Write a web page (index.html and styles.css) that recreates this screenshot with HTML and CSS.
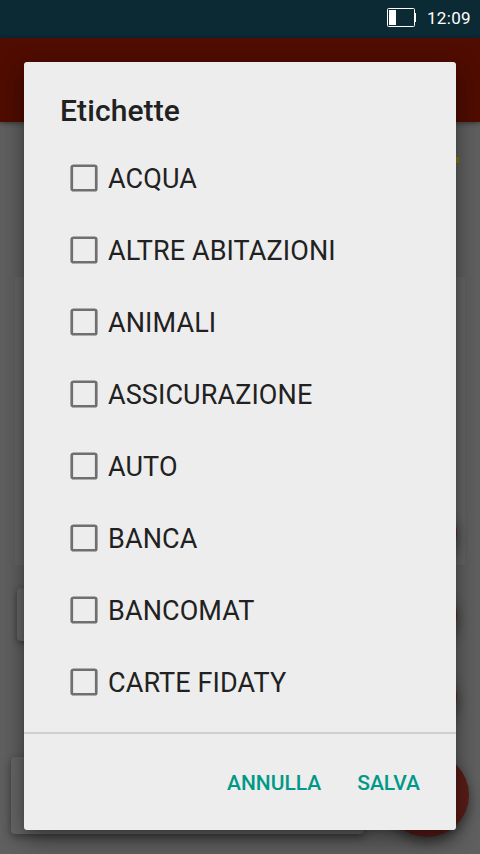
FILE: index.html
```html
<!DOCTYPE html>
<html lang="it">
<head>
<meta charset="utf-8">
<title>Etichette</title>
<link rel="stylesheet" href="styles.css">
</head>
<body>
<header class="status">
  <svg class="battery" width="29" height="20" viewBox="0 0 29 20"><rect x=".5" y=".5" width="27" height="18" rx="1" fill="none" stroke="#fff"/><path d="M2 2h7v15H2zM28 5h1v9h-1z" fill="#fff"/></svg>
  <span class="clock">12:09</span>
</header>
<div class="appbar"></div>
<main class="page">
  <div class="marker"></div>
  <div class="panel"></div>
  <div class="field"></div>
  <div class="snack"></div>
</main>
<div class="fabs">
  <i class="fab mini"></i>
  <i class="fab mini"></i>
  <i class="fab mini"></i>
  <i class="fab"></i>
</div>
<svg width="0" height="0" class="defs"><symbol id="box" viewBox="0 0 28 28"><rect x="1.75" y="1.75" width="24.5" height="24.5" rx="1.6" fill="none" stroke="#6f6f6f" stroke-width="2.7"/></symbol></svg>
<section class="dialog" role="dialog">
  <h1 class="title">Etichette</h1>
  <ul class="list">
    <li class="item"><svg class="box"><use href="#box"/></svg><span class="label">ACQUA</span></li>
    <li class="item"><svg class="box"><use href="#box"/></svg><span class="label">ALTRE ABITAZIONI</span></li>
    <li class="item"><svg class="box"><use href="#box"/></svg><span class="label">ANIMALI</span></li>
    <li class="item"><svg class="box"><use href="#box"/></svg><span class="label">ASSICURAZIONE</span></li>
    <li class="item"><svg class="box"><use href="#box"/></svg><span class="label">AUTO</span></li>
    <li class="item"><svg class="box"><use href="#box"/></svg><span class="label">BANCA</span></li>
    <li class="item"><svg class="box"><use href="#box"/></svg><span class="label">BANCOMAT</span></li>
    <li class="item"><svg class="box"><use href="#box"/></svg><span class="label">CARTE FIDATY</span></li>
  </ul>
  <footer class="actions">
    <button class="action">ANNULLA</button>
    <button class="action">SALVA</button>
  </footer>
</section>
</body>
</html>
```
FILE: styles.css
```css
* { box-sizing: border-box; }
body {
  position: relative;
  display: flex;
  flex-direction: column;
  height: 854px;
  margin: 0;
  overflow: hidden;
  background: #606060;
  font-family: Roboto, sans-serif;
}
.status {
  display: flex;
  align-items: center;
  justify-content: flex-end;
  gap: 11px;
  height: 38px;
  padding: 0 9px 2px 0;
  background: #0b2a33;
  color: #fff;
}
.clock {
  font-size: 17px;
  line-height: 20px;
  letter-spacing: .35px;
}
.appbar {
  height: 84px;
  background: #500c01;
  box-shadow: 0 1px 5px rgba(0, 0, 0, .45);
  z-index: 1;
}
.page {
  display: flex;
  flex-direction: column;
  align-items: flex-start;
  height: 732px;
}
.marker {
  align-self: flex-end;
  width: 9px;
  height: 6px;
  margin: 35px 21px 0 0;
  background: #877414;
}
.panel {
  width: 450px;
  height: 288px;
  margin: 114px 0 0 15px;
  background: #666;
}
.field {
  width: 340px;
  height: 53px;
  margin: 23px 0 0 17px;
  border-radius: 4px;
  background: #666;
  box-shadow: 0 2px 6px rgba(0, 0, 0, .4);
}
.snack {
  width: 353px;
  height: 77px;
  margin: 116px 0 0 11px;
  border-radius: 4px;
  background: #666;
  box-shadow: 0 3px 8px rgba(0, 0, 0, .4);
}
.fabs {
  position: absolute;
  right: 11px;
  bottom: 17px;
  display: flex;
  flex-direction: column;
  align-items: center;
  gap: 22px;
}
.fab {
  width: 84px;
  height: 84px;
  margin-top: 4px;
  border-radius: 50%;
  background: #5a1c17;
  box-shadow: 0 5px 12px rgba(0, 0, 0, .45);
}
.mini {
  width: 60px;
  height: 60px;
  margin-top: 0;
  background: #70251e;
}
.defs { position: absolute; }
.dialog {
  position: absolute;
  top: 62px;
  left: 24px;
  z-index: 2;
  display: flex;
  flex-direction: column;
  width: 432px;
  height: 768px;
  border-radius: 3px;
  background: #ededed;
  box-shadow: 0 9px 26px rgba(0, 0, 0, .45), 0 2px 4px rgba(0, 0, 0, .1);
  color: #212121;
}
.title {
  height: 80px;
  margin: 0;
  padding: 31px 36px 0;
  font-size: 30px;
  font-weight: 500;
  line-height: 35px;
  letter-spacing: .1px;
}
.list {
  height: 590px;
  margin: 0;
  padding: 0 46px;
  list-style: none;
}
.item {
  display: flex;
  align-items: center;
  gap: 10px;
  height: 72px;
  font-size: 27px;
  line-height: 32px;
  letter-spacing: .1px;
}
.box {
  width: 28px;
  height: 28px;
}
.label { padding-top: 2px; }
.actions {
  display: flex;
  align-items: center;
  justify-content: flex-end;
  gap: 36px;
  height: 98px;
  padding: 2px 36px 0 0;
  border-top: 2px solid #cfcfcf;
}
.action {
  padding: 0;
  border: 0;
  background: none;
  color: #009987;
  font: 500 21px/24px Roboto, sans-serif;
}
```
